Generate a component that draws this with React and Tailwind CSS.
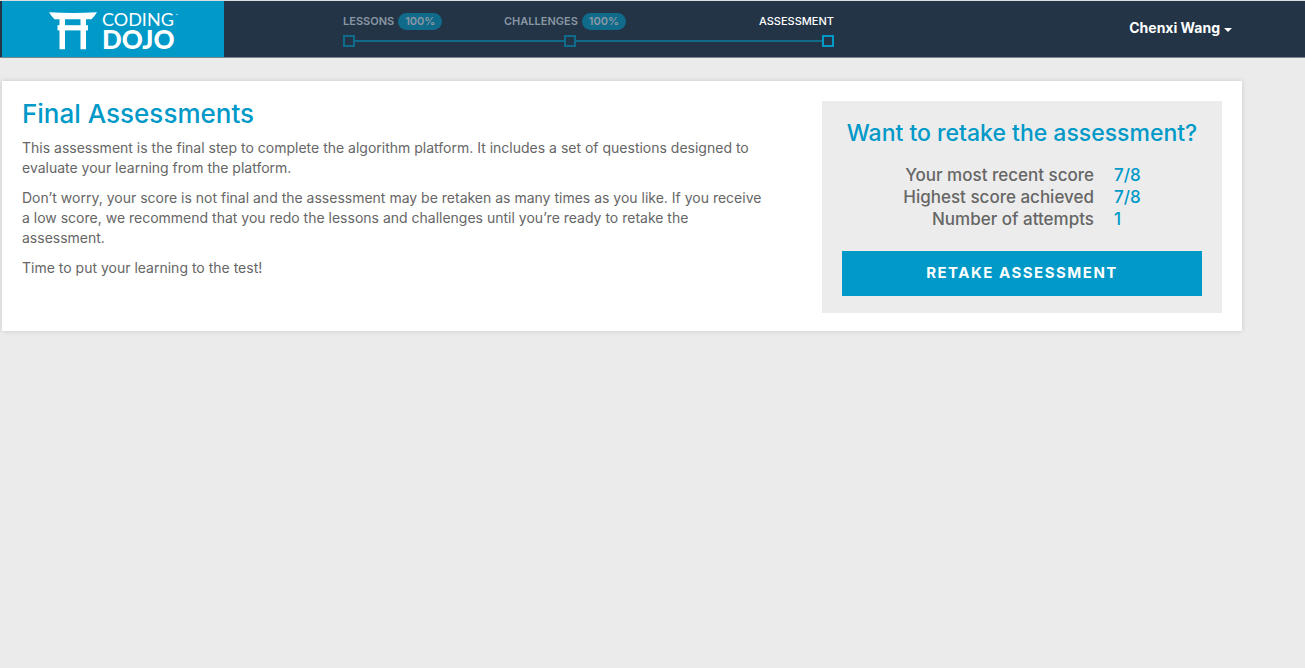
function Logo() {
  return (
    <svg viewBox="0 0 222 56" className="h-14 w-[222px]" role="img" aria-label="Coding Dojo">
      <g fill="#fff">
        <path d="M47 11.300Q71 12.800 95 11.300Q92.500 15.500 89.500 18.300H52.500Q49.500 15.500 47 11.300Z" />
        <path d="M57.500 18h5.500v30.300h-5.500zM78.500 18h5.500v30.300h-5.500z" />
        <path d="M55.500 24.200h30.500v5.200h-30.500z" />
      </g>
      <text x="100" y="25" fill="#fff" className="font-['Lato'] text-[18px] font-normal">CODING</text>
      <text x="100" y="48" fill="#fff" className="font-['Lato'] text-[26px] font-black">DOJO</text>
      <circle cx="175" cy="13.500" r="0.8" fill="#fff" opacity="0.7" />
    </svg>
  );
}

function Step({ label, percent, className }) {
  return (
    <li className={className}>
      <a href="#" className="flex h-[17px] items-center gap-1">
        <span>{label}</span>
        {percent && (
          <span className="flex h-[17px] items-center rounded-full bg-[#106b8b] px-[7px]">{percent}</span>
        )}
      </a>
    </li>
  );
}

function Progress() {
  return (
    <nav aria-label="Course progress" className="ml-[119px] w-[491px] pt-3 text-[11px]">
      <ol className="flex font-semibold text-[#8a97a3]">
        <Step label="LESSONS" percent="100%" className="w-[161px]" />
        <Step label="CHALLENGES" percent="100%" />
        <Step label="ASSESSMENT" className="ml-auto font-medium text-white" />
      </ol>
      <div className="mt-[5px] flex items-center">
        <span className="size-3 border-2 border-[#106b8b]" />
        <span className="h-0.5 flex-[209] bg-[#106b8b]" />
        <span className="size-3 border-2 border-[#106b8b]" />
        <span className="h-0.5 flex-[246] bg-[#106b8b]" />
        <span className="size-3 border-2 border-[#0099c8]" />
      </div>
    </nav>
  );
}

const scores = [
  ["Your most recent score", "7/8"],
  ["Highest score achieved", "7/8"],
  ["Number of attempts", "1"],
];

export default function App() {
  return (
    <div className="min-h-screen bg-[#ebebeb] font-['Inter',sans-serif] text-[#666]">
      <header className="flex border-y border-t-[#dcdfe1] border-b-[#7b8790] bg-[#223446]">
        <a href="#" className="ml-0.5 bg-[#0099c8]">
          <Logo />
        </a>
        <Progress />
        <button type="button" className="mr-[73px] ml-auto flex items-center gap-1 pb-[3px] text-[14px] font-bold text-white">
          Chenxi Wang
          <svg viewBox="0 0 8 4" className="mt-1 h-1 w-2" fill="currentColor" aria-hidden="true">
            <path d="M0 0h8L4 4z" />
          </svg>
        </button>
      </header>

      <main className="mt-[23px] mr-[63px] ml-0.5 flex items-start gap-5 bg-white px-5 pt-5 pb-[18px] shadow-[0_0_5px_rgba(0,0,0,0.15)]">
        <section className="flex-1 pr-[34px] text-[14px] leading-5">
          <h1 className="mb-[11px] text-[26px] leading-[26px] font-medium text-[#0099c8]">Final Assessments</h1>
          <p className="mb-[10px]">
            This assessment is the final step to complete the algorithm platform. It includes a set of questions
            designed to evaluate your learning from the platform.
          </p>
          <p className="mb-[10px]">
            Don’t worry, your score is not final and the assessment may be retaken as many times as you like. If you
            receive a low score, we recommend that you redo the lessons and challenges until you’re ready to retake the
            assessment.
          </p>
          <p>Time to put your learning to the test!</p>
        </section>

        <aside className="w-[400px] bg-[#ececec] px-5 pt-[18px] pb-[17px]">
          <h2 className="text-center text-[23px] leading-7 font-medium text-[#0099c8]">Want to retake the assessment?</h2>
          <table className="mx-auto mt-[17px] text-[17px] leading-[22px] font-medium">
            <tbody>
              {scores.map(([label, value]) => (
                <tr key={label}>
                  <th scope="row" className="pr-5 text-right font-medium">{label}</th>
                  <td className="text-left text-[#0099c8]">{value}</td>
                </tr>
              ))}
            </tbody>
          </table>
          <button type="button" className="mt-[21px] h-[45px] w-full bg-[#0099c8] text-[15px] font-bold tracking-widest text-white">
            RETAKE ASSESSMENT
          </button>
        </aside>
      </main>
    </div>
  );
}
